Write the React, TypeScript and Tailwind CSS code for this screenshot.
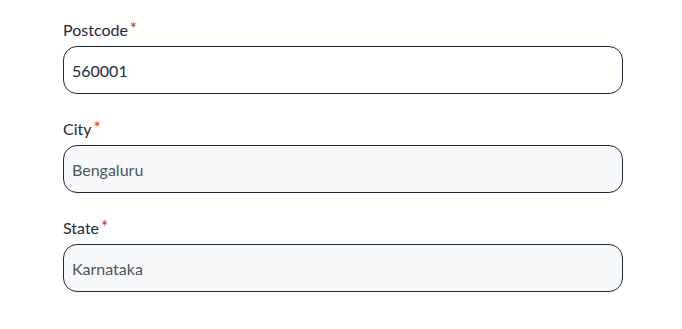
export default function App() {
  const fields = [
    { label: "Postcode", value: "560001", editable: true },
    { label: "City", value: "Bengaluru", editable: false },
    { label: "State", value: "Karnataka", editable: false },
  ];

  return (
    <div className="min-h-screen bg-white pt-[20px] pl-[63px] font-['Lato',sans-serif]">
      <div className="flex w-[560px] flex-col gap-[25px]">
        {fields.map((f) => (
          <div key={f.label} className="flex flex-col gap-[6px]">
            <label className="flex items-start text-[16px] leading-[20px] text-[#1f2937]">
              {f.label}
              <span className="ml-[2px] text-[17px] leading-[17px] text-[#e02424]">*</span>
            </label>
            <input
              defaultValue={f.value}
              readOnly={!f.editable}
              autoFocus={f.editable}
              onFocus={(e) => e.currentTarget.setSelectionRange(0, 0)}
              className={
                "h-[48px] w-full rounded-[14px] border border-[#1f2937] px-[8px] text-[16px] outline-none caret-[#1f2937] " +
                (f.editable ? "bg-white text-[#1f2937]" : "bg-[#f8f9fb] text-[#4b5563]")
              }
            />
          </div>
        ))}
      </div>
    </div>
  );
}
